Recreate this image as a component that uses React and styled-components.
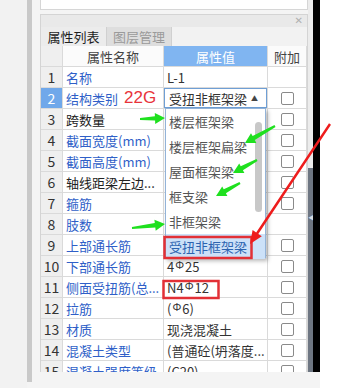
import React from 'react';
import styled, { createGlobalStyle } from 'styled-components';

const GlobalStyle = createGlobalStyle`
  html, body { margin: 0; padding: 0; }
  body {
    width: 348px;
    height: 388px;
    overflow: hidden;
    background: #f4f4f4;
    font-family: "Noto Sans CJK SC", "Noto Sans", sans-serif;
  }
`;

const rows = [
  { no: 1, name: '名称', value: 'L-1', check: false },
  { no: 2, name: '结构类别', value: '受扭非框架梁', check: true, combo: true },
  { no: 3, name: '跨数量', plain: true, value: '', check: true },
  { no: 4, name: '截面宽度(mm)', value: '', check: true },
  { no: 5, name: '截面高度(mm)', value: '', check: true },
  { no: 6, name: '轴线距梁左边...', plain: true, value: '', check: true },
  { no: 7, name: '箍筋', value: '', check: true },
  { no: 8, name: '肢数', value: '', check: false },
  { no: 9, name: '上部通长筋', value: '', check: true },
  { no: 10, name: '下部通长筋', value: ['4', 'bar', '25'], check: true },
  { no: 11, name: '侧面受扭筋(总...', value: ['N4', 'bar', '12'], check: true },
  { no: 12, name: '拉筋', value: ['(', 'phi', '6)'], check: true },
  { no: 13, name: '材质', value: '现浇混凝土', check: true },
  { no: 14, name: '混凝土类型', value: '(普通砼(坍落度...', check: true },
  { no: 15, name: '混凝土强度等级', value: '(C20)', check: true },
];

const options = ['楼层框架梁', '楼层框架扁梁', '屋面框架梁', '框支梁', '非框架梁', '受扭非框架梁'];

const Page = styled.div`
  position: relative;
  display: flex;
  width: 348px;
  height: 388px;
`;

const Gutter = styled.div`
  width: 27px;
  background: #f2f2f2;
`;

const Splitter = styled.div`
  width: 5px;
  height: 382px;
  margin-right: 8px;
  background: #c9c9c9;
`;

const Workspace = styled.div`
  width: 268px;
  height: 372px;
  display: flex;
  flex-direction: column;
  overflow: hidden;
`;

const TopBox = styled.div`
  height: 9px;
  background: #fff;
  border: 1px solid #d6d6d6;
  border-top: none;
`;

const Panel = styled.div`
  margin-top: 4px;
  flex: 1;
  display: flex;
  flex-direction: column;
  background: #fff;
  border: 1px solid #d4d4d4;
  border-bottom: none;
  overflow: hidden;
`;

const PanelHead = styled.div`
  height: 12px;
  display: flex;
  align-items: center;
  justify-content: flex-end;
  padding-right: 4px;
  background: #e9e9e9;
  color: #b0b0b0;
  font-family: "DejaVu Sans", sans-serif;
  font-size: 10px;
  line-height: 12px;
`;

const TabBar = styled.div`
  height: 21px;
  display: flex;
  background: #f2f2f2;
`;

const Tab = styled.div`
  width: ${p => (p.$active ? 65 : 64)}px;
  display: flex;
  align-items: center;
  justify-content: center;
  font-size: 13px;
  color: ${p => (p.$active ? '#1e1e1e' : '#9a9a9a')};
  background: ${p => (p.$active ? '#ececec' : '#dedede')};
  border-right: 1px solid #d0d0d0;
`;

const TableWrap = styled.div`
  position: relative;
  flex: 1;
`;

const Grid = styled.div`
  display: grid;
  grid-template-columns: 22px 101px 104px 39px;
  grid-auto-rows: 21px;
  width: 266px;
`;

const Cell = styled.div`
  display: flex;
  align-items: center;
  box-sizing: border-box;
  border-right: 1px solid #dadada;
  border-bottom: 1px solid #dadada;
  font-size: 13px;
  white-space: nowrap;
  overflow: hidden;
`;

const HeadCell = styled(Cell)`
  justify-content: center;
  color: ${p => (p.$accent ? '#ffffff' : '#444')};
  background: ${p => (p.$accent ? '#80b5f1' : p.$num ? '#efefef' : '#fbfbfb')};
`;

const NumCell = styled(Cell)`
  justify-content: center;
  font-size: 14px;
  color: ${p => (p.$selected ? '#fff' : '#333')};
  background: ${p => (p.$selected ? '#70a8ea' : '#efefef')};
`;

const NameCell = styled(Cell)`
  padding-left: 3px;
  color: ${p => (p.$plain ? '#222' : '#2f5fc8')};
`;

const ValueCell = styled(Cell)`
  padding-left: 3px;
  color: #333;
`;

const AddCell = styled(Cell)`
  justify-content: center;
`;

const Note = styled.span`
  margin-left: 6px;
  font-family: "Liberation Sans", Arial, sans-serif;
  font-size: 17px;
  color: #e8333a;
`;

const Combo = styled.div`
  flex: 1;
  align-self: stretch;
  display: flex;
  align-items: center;
  justify-content: space-between;
  margin-left: -3px;
  padding: 0 8px 0 4px;
  border: 1px solid #6f9fd5;
  background: #fff;
`;

const Caret = styled.span`
  font-size: 7px;
  color: #444;
`;

const Bar = styled.span`
  font-size: 11px;
  text-decoration: ${p => (p.$plain ? 'none' : 'overline')};
  position: relative;
  top: -2px;
  margin: 0 1px;
`;

const Check = styled.span`
  width: 13px;
  height: 13px;
  box-sizing: border-box;
  border: 1px solid #8a8a8a;
  border-radius: 2px;
  background: #fff;
`;

const DropList = styled.div`
  position: absolute;
  left: 124px;
  top: 62px;
  width: 101px;
  height: 150px;
  box-sizing: border-box;
  background: #fff;
  border: 1px solid #93b3d8;
  box-shadow: 2px 3px 4px rgba(0, 0, 0, 0.28);
  display: flex;
  flex-direction: column;
`;

const Option = styled.div`
  height: 25px;
  flex: none;
  display: flex;
  align-items: center;
  padding-left: 3px;
  font-size: 13px;
  color: ${p => (p.$active ? '#2c64b0' : '#555')};
  background: ${p => (p.$active ? '#cce1f8' : 'transparent')};
`;

const ScrollThumb = styled.div`
  position: absolute;
  left: 89px;
  top: 13px;
  width: 7px;
  height: 90px;
  border-radius: 4px;
  background: #c8c8c8;
`;

const Edge = styled.div`
  width: 5px;
  height: 372px;
  background: #ececec;
  display: flex;
  flex-direction: column;
  justify-content: flex-end;
`;

const EdgeHandle = styled.div`
  height: 204px;
  background: #6e7682;
  color: #d9dde2;
  font-size: 7px;
  line-height: 7px;
  padding-top: 46px;
  box-sizing: border-box;
  text-align: center;
`;

const BlackBar = styled.div`
  width: 7px;
  height: 372px;
  background: #000;
`;

const WhiteSide = styled.div`
  flex: 1;
  background: #fff;
`;

const Overlay = styled.svg`
  position: absolute;
  left: 0;
  top: 0;
  pointer-events: none;
`;

function arrow(x1, y1, x2, y2, tail, shaft, head, headLen) {
  const dx = x2 - x1;
  const dy = y2 - y1;
  const len = Math.hypot(dx, dy);
  const ux = dx / len;
  const uy = dy / len;
  const nx = -uy;
  const ny = ux;
  const bx = x2 - ux * headLen;
  const by = y2 - uy * headLen;
  const pts = [
    [x1 + nx * tail / 2, y1 + ny * tail / 2],
    [bx + nx * shaft / 2, by + ny * shaft / 2],
    [bx + nx * head / 2, by + ny * head / 2],
    [x2, y2],
    [bx - nx * head / 2, by - ny * head / 2],
    [bx - nx * shaft / 2, by - ny * shaft / 2],
    [x1 - nx * tail / 2, y1 - ny * tail / 2],
  ];
  return pts.map(p => p.map(v => v.toFixed(1)).join(',')).join(' ');
}

const greenArrows = [
  [140, 119, 165, 118],
  [275, 126, 245, 143],
  [257, 160, 233, 173],
  [240, 183, 216, 196],
  [132, 228, 165, 224],
];

function Value({ row }) {
  if (row.combo) {
    return (
      <Combo>
        {row.value}
        <Caret>▲</Caret>
      </Combo>
    );
  }
  if (Array.isArray(row.value)) {
    return row.value.map((part, i) =>
      part === 'bar' ? <Bar key={i}>Φ</Bar> : part === 'phi' ? <Bar key={i} $plain>Φ</Bar> : <span key={i}>{part}</span>
    );
  }
  return row.value;
}

export default function App() {
  return (
    <Page>
      <GlobalStyle />
      <Gutter />
      <Splitter />
      <Workspace>
        <TopBox />
        <Panel>
          <PanelHead>✕</PanelHead>
          <TabBar>
            <Tab $active>属性列表</Tab>
            <Tab>图层管理</Tab>
          </TabBar>
          <TableWrap>
            <Grid>
              <HeadCell $num />
              <HeadCell>属性名称</HeadCell>
              <HeadCell $accent>属性值</HeadCell>
              <HeadCell>附加</HeadCell>
              {rows.map(row => (
                <React.Fragment key={row.no}>
                  <NumCell $selected={row.no === 2}>{row.no}</NumCell>
                  <NameCell $plain={row.plain}>
                    {row.name}
                    {row.no === 2 && <Note>22G</Note>}
                  </NameCell>
                  <ValueCell>
                    <Value row={row} />
                  </ValueCell>
                  <AddCell>{row.check && <Check />}</AddCell>
                </React.Fragment>
              ))}
            </Grid>
            <DropList>
              {options.map((o, i) => (
                <Option key={o} $active={i === options.length - 1}>{o}</Option>
              ))}
              <ScrollThumb />
            </DropList>
          </TableWrap>
        </Panel>
      </Workspace>
      <Edge>
        <EdgeHandle>◀</EdgeHandle>
      </Edge>
      <BlackBar />
      <WhiteSide />
      <Overlay width="348" height="388" viewBox="0 0 348 388">
        {greenArrows.map((a, i) => (
          <polygon key={i} points={arrow(a[0], a[1], a[2], a[3], 2, 4.5, 11, 10)} fill="#1fe01f" />
        ))}
        <rect x="164.5" y="237" width="87" height="21" fill="none" stroke="#e23036" strokeWidth="2.5" />
        <rect x="163.5" y="281" width="55" height="17" fill="none" stroke="#e23036" strokeWidth="2.5" />
        <polygon points={arrow(330, 124, 250, 244, 2.5, 2.5, 11, 13)} fill="#ee1c1c" />
      </Overlay>
    </Page>
  );
}
